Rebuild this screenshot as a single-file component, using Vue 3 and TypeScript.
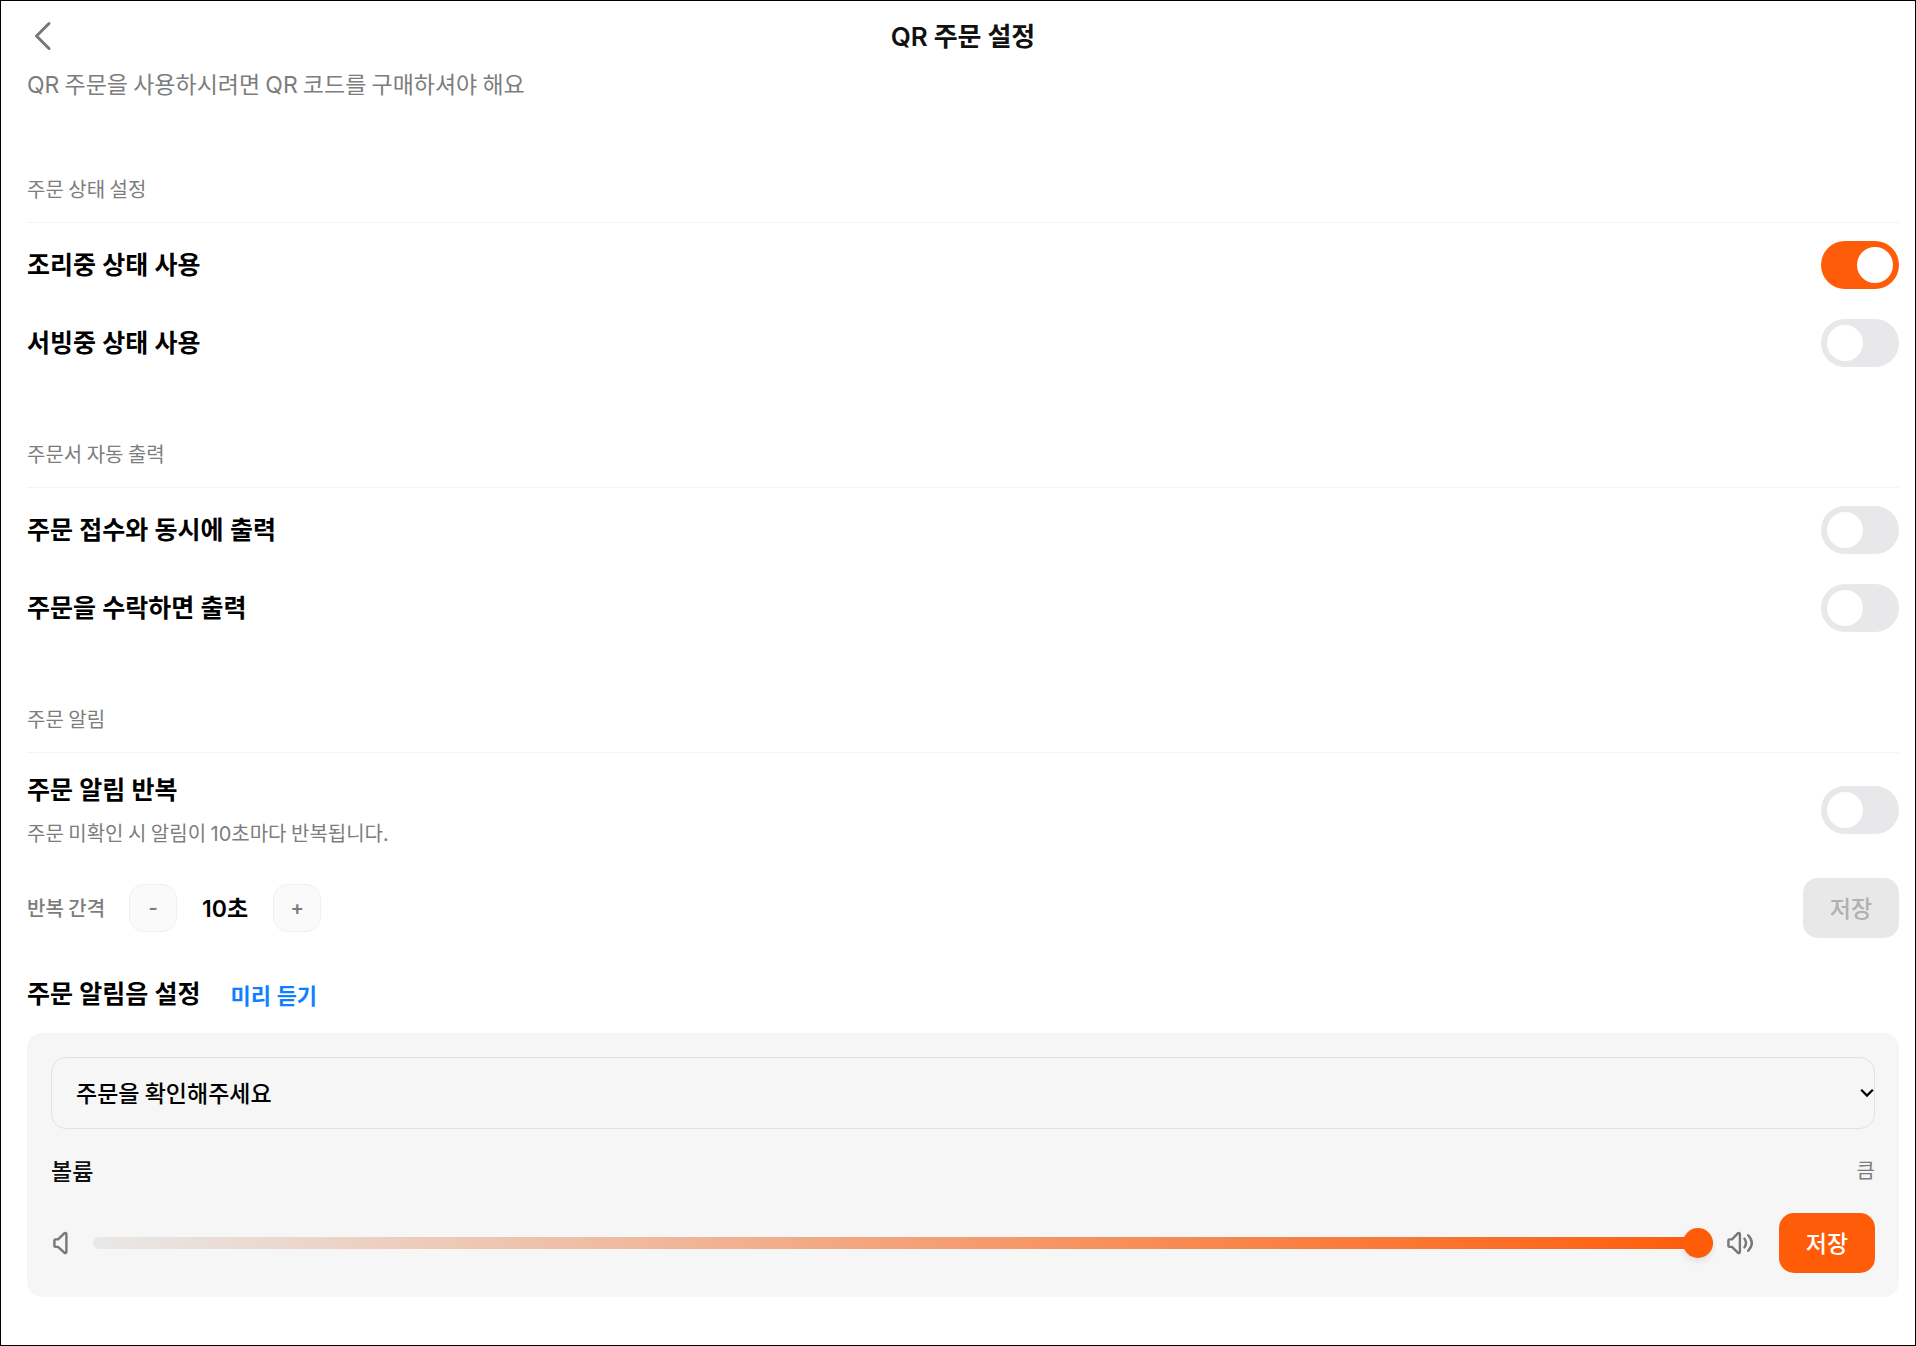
<script setup lang="ts">
import { computed, reactive, ref } from 'vue'

interface ToggleOption {
  id: string
  label: string
  enabled: boolean
}

interface ToggleSection {
  title: string
  options: ToggleOption[]
}

const sections = reactive<ToggleSection[]>([
  {
    title: '주문 상태 설정',
    options: [
      { id: 'cooking', label: '조리중 상태 사용', enabled: true },
      { id: 'serving', label: '서빙중 상태 사용', enabled: false },
    ],
  },
  {
    title: '주문서 자동 출력',
    options: [
      { id: 'print-received', label: '주문 접수와 동시에 출력', enabled: false },
      { id: 'print-accepted', label: '주문을 수락하면 출력', enabled: false },
    ],
  },
])

const savedInterval = 10
const repeat = ref(false)
const interval = ref(savedInterval)
const sound = ref('confirm')
const volume = ref(100)

const volumeLabel = computed(() => {
  if (volume.value > 66) return '큼'
  return volume.value > 33 ? '보통' : '작음'
})

function step(delta: number) {
  interval.value = Math.max(1, interval.value + delta)
}
</script>

<template>
  <main class="page">
    <header class="header">
      <button class="back" type="button" aria-label="뒤로">
        <svg width="30" height="36" viewBox="0 0 30 36" fill="none" stroke="#777" stroke-width="3" stroke-linecap="round" stroke-linejoin="round">
          <path d="M22 5.5 9.500 18 22 30.500" />
        </svg>
      </button>
      <h1 class="title"><span class="latin">QR</span> 주문 설정</h1>
    </header>
    <p class="notice">
      <span class="latin">QR</span> 주문을 사용하시려면 <span class="latin">QR</span> 코드를 구매하셔야 해요
    </p>

    <section v-for="section in sections" :key="section.title" class="section">
      <h2 class="section-title">{{ section.title }}</h2>
      <div class="rows">
        <div v-for="option in section.options" :key="option.id" class="row">
          <label class="heading" :for="option.id">{{ option.label }}</label>
          <input :id="option.id" v-model="option.enabled" class="toggle" type="checkbox" role="switch" />
        </div>
      </div>
    </section>

    <section class="section">
      <h2 class="section-title">주문 알림</h2>
      <div class="rows">
        <div class="row">
          <div class="stack">
            <label class="heading" for="repeat">주문 알림 반복</label>
            <p class="caption">주문 미확인 시 알림이 <span class="latin">{{ interval }}</span>초마다 반복됩니다.</p>
          </div>
          <input id="repeat" v-model="repeat" class="toggle" type="checkbox" role="switch" />
        </div>
        <div class="row">
          <div class="interval">
            <span class="interval-label">반복 간격</span>
            <button class="step" type="button" @click="step(-1)">-</button>
            <output class="interval-value"><span class="latin">{{ interval }}</span>초</output>
            <button class="step" type="button" @click="step(1)">+</button>
          </div>
          <button class="save" type="button" :disabled="interval === savedInterval">저장</button>
        </div>
      </div>

      <div class="sound-head">
        <label class="heading" for="sound">주문 알림음 설정</label>
        <button class="preview" type="button">미리 듣기</button>
      </div>
      <div class="panel">
        <div class="select-box">
          <select id="sound" v-model="sound" class="select">
            <option value="confirm">주문을 확인해주세요</option>
          </select>
          <svg class="select-arrow" width="14" height="10" viewBox="0 0 14 10" fill="none" stroke="#000" stroke-width="2.200">
            <path d="M1.200 1.800 7 7.600 12.800 1.800" />
          </svg>
        </div>
        <div class="volume-head">
          <label class="volume-title" for="volume">볼륨</label>
          <span class="volume-level">{{ volumeLabel }}</span>
        </div>
        <div class="volume-row">
          <svg class="icon" width="30" height="30" viewBox="0 0 30 30" fill="none" stroke="#777" stroke-width="2.400" stroke-linecap="round" stroke-linejoin="round">
            <path d="M4.600 11.400H7L13.300 5.300Q15.400 4 15.400 6.500V23.500Q15.400 26 13.300 24.700L7 18.900H4.600Q3.400 18.900 3.400 17.700V12.600Q3.400 11.400 4.600 11.400Z" />
          </svg>
          <input id="volume" v-model.number="volume" class="range" type="range" min="0" max="100" />
          <svg class="icon" width="30" height="30" viewBox="0 0 30 30" fill="none" stroke="#777" stroke-width="2.400" stroke-linecap="round" stroke-linejoin="round">
            <path d="M4.600 11.400H7L12.800 5.300Q14.900 4 14.900 6.500V23.500Q14.900 26 12.800 24.700L7 18.900H4.600Q3.400 18.900 3.400 17.700V12.600Q3.400 11.400 4.600 11.400Z" />
            <path d="M19.400 10.600Q22.600 15 19.400 19.400" />
            <path d="M23.200 7.200Q30.400 15 23.200 22.800" />
          </svg>
          <button class="save volume-save" type="button">저장</button>
        </div>
      </div>
    </section>
  </main>
</template>

<style>
body {
  margin: 0;
  background: #fff;
}
</style>

<style scoped>
.page {
  box-sizing: border-box;
  min-height: 100vh;
  padding: 0 16px 24px 26px;
  border: 1px solid #000;
  color: #000;
  font-family: 'Noto Sans CJK KR', sans-serif;
}

h1,
h2,
p {
  margin: 0;
}

button,
select {
  margin: 0;
  font-family: inherit;
}

button {
  padding: 0;
  border: 0;
  background: none;
  cursor: pointer;
}

.latin {
  font-family: Inter, sans-serif;
  line-height: 0;
}

.header {
  display: grid;
  grid-template-columns: 1fr auto 1fr;
  align-items: center;
  height: 70px;
}

.back {
  display: flex;
  justify-self: start;
}

.title {
  padding-bottom: 2px;
  color: #111;
  font-size: 26px;
  font-weight: 600;
  line-height: 36px;
}

.notice {
  color: #7d7d7d;
  font-size: 23px;
  line-height: 24px;
}

.section {
  margin-top: 72px;
}

.notice + .section {
  margin-top: 79px;
}

.section-title {
  padding-bottom: 18px;
  border-bottom: 1px solid #f4f4f4;
  color: #7d7d7d;
  font-size: 20px;
  font-weight: 400;
  line-height: 30px;
}

.rows {
  display: flex;
  flex-direction: column;
  gap: 30px;
  padding-top: 18px;
}

.row {
  display: flex;
  align-items: center;
  justify-content: space-between;
}

.heading {
  font-family: Inter, 'Noto Sans CJK KR', sans-serif;
  font-size: 25px;
  font-weight: 600;
  line-height: 38px;
}

.stack {
  display: flex;
  flex-direction: column;
  gap: 9px;
}

.caption {
  color: #7d7d7d;
  font-size: 20px;
  line-height: 30px;
}

.toggle {
  display: flex;
  flex: none;
  box-sizing: border-box;
  width: 78px;
  height: 48px;
  margin: 0;
  padding: 6px;
  border-radius: 24px;
  background: #e8e8ea;
  appearance: none;
  cursor: pointer;
}

.toggle::before {
  width: 36px;
  height: 36px;
  border-radius: 50%;
  background: #fff;
  content: '';
}

.toggle:checked {
  justify-content: flex-end;
  background: #ff5c0a;
}

.interval {
  display: flex;
  align-items: center;
  gap: 24px;
}

.interval-label {
  padding-bottom: 2px;
  color: #7d7d7d;
  font-size: 20px;
  font-weight: 500;
}

.step {
  box-sizing: border-box;
  width: 48px;
  height: 48px;
  border: 1px solid #f0f0f0;
  border-radius: 15px;
  background: #fafafa;
  color: #7d7d7d;
  font-family: Inter, sans-serif;
  font-size: 20px;
  font-weight: 600;
}

.interval-value {
  min-width: 48px;
  padding-bottom: 2px;
  font-size: 23px;
  font-weight: 600;
  text-align: center;
}

.save {
  flex: none;
  width: 96px;
  height: 60px;
  padding-bottom: 3px;
  border-radius: 15px;
  background: #ff5c0a;
  color: #fff;
  font-size: 23px;
  font-weight: 500;
}

.save:disabled {
  background: #e8e8e8;
  color: #b0b0b0;
  cursor: default;
}

.sound-head {
  display: flex;
  align-items: center;
  gap: 30px;
  margin: 37px 0 20px;
}

.preview {
  color: #107fff;
  font-family: Inter, 'Noto Sans CJK KR', sans-serif;
  font-size: 22px;
  font-weight: 600;
}

.panel {
  display: flex;
  flex-direction: column;
  gap: 24px;
  padding: 24px;
  border-radius: 15px;
  background: #f6f6f6;
}

.select-box {
  position: relative;
}

.select {
  display: block;
  box-sizing: border-box;
  width: 100%;
  height: 72px;
  padding: 0 24px 2px;
  border: 1px solid #e2e2e2;
  border-radius: 15px;
  background: transparent;
  color: #000;
  font-size: 23px;
  font-weight: 500;
  appearance: none;
}

.select-arrow {
  position: absolute;
  top: 31px;
  right: 1px;
  pointer-events: none;
}

.volume-head {
  display: flex;
  align-items: center;
  justify-content: space-between;
  box-sizing: border-box;
  height: 36px;
  padding-bottom: 3px;
}

.volume-title {
  color: #111;
  font-size: 23px;
  font-weight: 500;
}

.volume-level {
  color: #7d7d7d;
  font-size: 20px;
}

.volume-row {
  display: flex;
  align-items: center;
  gap: 12px;
}

.icon {
  flex: none;
}

.range {
  flex: 1;
  min-width: 0;
  height: 12px;
  margin: 0;
  border-radius: 6px;
  background: linear-gradient(to right, #e8e8e8, #ff5c0a);
  appearance: none;
}

.range::-webkit-slider-thumb {
  width: 30px;
  height: 30px;
  border-radius: 50%;
  background: #ff5c0a;
  box-shadow: 0 3px 6px rgba(0, 0, 0, 0.1);
  appearance: none;
}

.volume-save {
  margin-left: 12px;
}
</style>
